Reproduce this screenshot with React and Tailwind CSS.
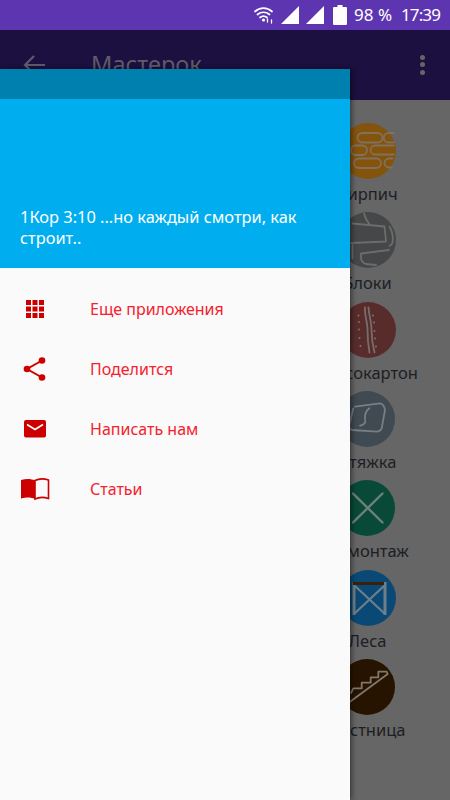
const font = { fontFamily: '"Noto Sans", sans-serif' }

function Circle({ fill, children }) {
  return (
    <svg width="56" height="56" viewBox="0 0 56 56" fill="none" stroke="#808080" strokeWidth="1.800" strokeLinecap="round" strokeLinejoin="round">
      <circle cx="28" cy="28" r="28" fill={fill} stroke="none" />
      {children}
    </svg>
  )
}

const tiles = [
  {
    label: 'Кирпич',
    fill: '#84540c',
    icon: (
      <g stroke="#80705c">
        <rect x="17.500" y="10" width="25" height="9.500" rx="4.700" />
        <path d="M54 10h-5.500a4.700 4.700 0 0 0 0 9.500H54" />
        <rect x="11" y="22.500" width="16" height="9.500" rx="4.700" />
        <path d="M54 22.500H35a4.500 4.500 0 0 0 0 9h19" />
        <rect x="14" y="35.500" width="27" height="9.500" rx="4.700" />
        <path d="M52.500 35.500h-3.500a4.500 4.500 0 0 0 0 9h3" />
      </g>
    ),
  },
  {
    label: 'Блоки',
    fill: '#464748',
    icon: (
      <g stroke="#6c6c6c">
        <path d="M24 1.500c1 4 3 8 6 11.500M12.500 11.500l32 3 1.500 15-35 1.500" />
        <path d="M49.500 14.500c3 5 4 12 3 16-.5 2-1.500 3-3 3.500" />
        <path d="M12.500 33v13.500M21 41.500l28-3.500M21 41.500v4c0 4 2 5.500 5 6.500l10 1" />
      </g>
    ),
  },
  {
    label: 'Гипсокартон',
    fill: '#592c2c',
    icon: (
      <>
        <g stroke="#786d6d">
          <path d="M25 5.500c-.5 8 2.500 15 2.500 22 0 8 .5 15 2 23" />
          <path d="M28.500 5.500c.5 8 3 15 3 22 0 8 1 15 3 23" />
        </g>
        <g stroke="none" fill="#7d7272">
          <circle cx="18.500" cy="13.500" r="1" /><circle cx="19" cy="20" r="1" /><circle cx="19" cy="27.500" r="1" /><circle cx="19.500" cy="36" r="1" /><circle cx="20.500" cy="44" r="1" />
          <circle cx="33" cy="13.500" r="1" /><circle cx="34" cy="20.500" r="1" /><circle cx="34.500" cy="29" r="1" /><circle cx="35" cy="36.500" r="1" /><circle cx="36" cy="44.500" r="1" />
        </g>
      </>
    ),
  },
  {
    label: 'Стяжка',
    fill: '#404a52',
    icon: (
      <path
        d="M16 15.700L41 12.300Q45 13 46 19L42.700 37.300Q41.500 40.500 37.700 40.700L12.700 39Q10 38 10.300 34L14.300 17.300M30.300 17.300Q26 21 26 25.700T26.500 30.700Q25 34 21 34.700"
        stroke="#787e84"
      />
    ),
  },
  {
    label: 'Демонтаж',
    fill: '#084a37',
    icon: <path d="M14 13.500l29.500 29M43.500 13.500L14 42.500" stroke="#6e8078" strokeWidth="2.400" />,
  },
  {
    label: 'Леса',
    fill: '#0a4975',
    icon: (
      <>
        <path d="M14 15l31 29M45 15L14 44" stroke="#6e7f89" strokeWidth="2.200" strokeLinecap="butt" />
        <path d="M14 12v33M45 12v33" stroke="#6e7f89" strokeWidth="3" strokeLinecap="butt" />
        <path d="M13 13.500h31" stroke="#3a1f0c" strokeWidth="3" strokeLinecap="butt" />
      </>
    ),
  },
  {
    label: 'Лестница',
    fill: '#261400',
    icon: (
      <path
        d="M10 43.500L48.700 15M12 34l2.300-4.700h8.400v-5.600h9v-5.400h7.600v-5.600h8.400l1 2.300"
        stroke="#82776a"
        strokeWidth="1.800"
      />
    ),
  },
]

const menu = [
  {
    label: 'Еще приложения',
    icon: (
      <svg width="30" height="30" viewBox="0 0 30 30" fill="#cc0000">
        <path d="M6 6h5v5H6zM12.500 6h5v5h-5zM19 6h5v5h-5zM6 12.500h5v5H6zM12.500 12.500h5v5h-5zM19 12.500h5v5h-5zM6 19h5v5H6zM12.500 19h5v5h-5zM19 19h5v5h-5z" />
      </svg>
    ),
  },
  {
    label: 'Поделится',
    icon: (
      <svg width="30" height="30" viewBox="0 0 30 30" fill="#cc0000" stroke="#cc0000">
        <path d="M22 6.500L7 15l15 8.500" fill="none" strokeWidth="2" />
        <circle cx="22" cy="6.500" r="3.300" stroke="none" />
        <circle cx="7" cy="15" r="3.300" stroke="none" />
        <circle cx="22" cy="23.500" r="3.300" stroke="none" />
      </svg>
    ),
  },
  {
    label: 'Написать нам',
    icon: (
      <svg width="30" height="30" viewBox="0 0 30 30">
        <rect x="4" y="6" width="22" height="17.500" rx="2" fill="#cc0000" />
        <path d="M7 10.500l8 5 8-5" fill="none" stroke="#fafafa" strokeWidth="1.800" />
      </svg>
    ),
  },
  {
    label: 'Статьи',
    icon: (
      <svg width="30" height="30" viewBox="0 0 30 30">
        <path d="M1 6c5-1.500 10-1.500 14 .5V25c-4-2-9-2-14-.5z" fill="#cc0000" />
        <path d="M15 6.500c4-2 9-2 13.500-.5v18.500c-4.500-1.500-9.500-1.500-13.500.5z" fill="none" stroke="#cc0000" strokeWidth="1.600" />
      </svg>
    ),
  },
]

export default function App() {
  return (
    <div className="relative h-[800px] w-[450px] overflow-hidden bg-[#666666]" style={font}>
      {/* status bar */}
      <div className="flex h-[30px] items-center justify-end gap-[7px] bg-[#5e35b1] pb-[1px] pr-[10px] text-[17px] text-white">
        <svg width="20" height="20" viewBox="0 0 20 20" fill="none" stroke="white" strokeWidth="1.700" strokeLinecap="round">
          <path d="M1 6.500c5-4.500 12-4.500 17 0M3.500 9.500c3.500-3 8.500-3 12 0M6 12.500c2-1.700 5-1.700 7 0" />
          <circle cx="9.500" cy="15" r="1.600" fill="white" stroke="none" />
          <path d="M13.500 17v-3M17.500 15v3" strokeWidth="1.300" />
        </svg>
        <svg width="18" height="18" viewBox="0 0 18 18" fill="white"><path d="M0 18L18 0v18z" /></svg>
        <svg width="18" height="18" viewBox="0 0 18 18" fill="white"><path d="M0 18L18 0v18z" /></svg>
        <svg className="ml-[2px]" width="14" height="20" viewBox="0 0 14 20" fill="white"><path d="M4.500 0h5v2H13a1 1 0 0 1 1 1v16a1 1 0 0 1-1 1H1a1 1 0 0 1-1-1V3a1 1 0 0 1 1-1h3.500z" /></svg>
        <span>98 %</span>
        <span className="ml-[2px] tracking-[-0.9px]">17:39</span>
      </div>

      {/* toolbar */}
      <div className="flex h-[70px] items-center bg-[#1c1040] pb-[1px] pl-[23px] pr-[25px]">
        <svg width="22" height="20" viewBox="0 0 22 20" fill="none" stroke="#5f5b68" strokeWidth="2.200">
          <path d="M22 10H2M11 1l-9 9 9 9" />
        </svg>
        <span className="ml-[46px] text-[23.600px] text-[#5f5b68]">Мастерок</span>
        <div className="ml-auto flex flex-col gap-[2.500px]">
          <div className="h-[5px] w-[5px] rounded-full bg-[#666666]" />
          <div className="h-[5px] w-[5px] rounded-full bg-[#666666]" />
          <div className="h-[5px] w-[5px] rounded-full bg-[#666666]" />
        </div>
      </div>

      {/* categories behind the drawer */}
      <div className="ml-auto flex w-[160px] flex-col items-center pr-[5px] pt-[23px]">
        {tiles.map((tile) => (
          <div key={tile.label} className="flex h-[89.330px] flex-col items-center">
            <Circle fill={tile.fill}>{tile.icon}</Circle>
            <span className="mt-[4px] whitespace-nowrap text-[16.500px] leading-[21px] text-[#1c2024]">{tile.label}</span>
          </div>
        ))}
      </div>

      {/* drawer */}
      <div className="absolute bottom-0 left-0 top-[69px] flex w-[350px] flex-col bg-[#fafafa] shadow-[2px_0_5px_rgba(0,0,0,0.45)]">
        <div className="h-[30px] bg-[#0080ae]" />
        <div className="flex h-[169px] items-end bg-[#00aeef] px-[20px] pb-[20px] text-[16.400px] leading-[21px] text-white">
          1Кор 3:10 ...но каждый смотри, как строит..
        </div>
        <div className="pt-[11px]">
          {menu.map((item) => (
            <div key={item.label} className="flex h-[60px] items-center pl-[20px]">
              <div className="w-[70px]">{item.icon}</div>
              <span className="text-[16px] text-[#f5212d]">{item.label}</span>
            </div>
          ))}
        </div>
      </div>
    </div>
  )
}
